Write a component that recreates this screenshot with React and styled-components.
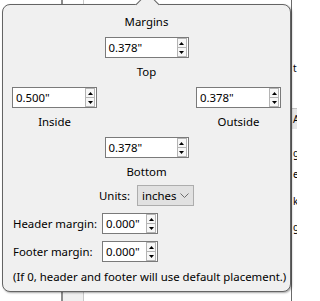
import React from 'react';
import styled, { createGlobalStyle } from 'styled-components';

const GlobalStyle = createGlobalStyle`
  html, body {
    margin: 0;
    padding: 0;
    background: #ffffff;
  }
  body {
    font-family: "Segoe UI", "Noto Sans", "Open Sans", sans-serif;
    font-size: 11.4px;
    color: #000;
  }
`;

const Page = styled.div`
  position: relative;
  width: 297px;
  height: 301px;
  overflow: hidden;
  display: flex;
  background: #fff;
`;

const DocArea = styled.div`
  width: 291px;
  flex-shrink: 0;
  display: flex;
`;

const DocRuler = styled.div`
  margin-left: 61px;
  width: 20px;
  border-left: 2px solid #8c8c8c;
  border-right: 1px solid #c8c8c8;
  background: linear-gradient(to bottom, #fff 0, #fff 280px, #f0f0f0 280px);
`;

const SidePanel = styled.div`
  flex: 1;
  border-left: 1px solid #6a6a6a;
  overflow: hidden;
  display: flex;
  flex-direction: column;
  padding-top: 60px;
`;

const SideLine = styled.div`
  height: ${p => p.$h}px;
  line-height: ${p => p.$h}px;
  padding-left: 1px;
  font-size: 10px;
  white-space: nowrap;
  background: ${p => (p.$shaded ? '#e6e6e6' : 'transparent')};
  border-top: ${p => (p.$shaded ? '1px solid #c4c4c4' : 'none')};
`;

const Popover = styled.div`
  position: absolute;
  left: 2px;
  top: 4px;
  width: 289px;
  box-sizing: border-box;
  background: #f0f0f0;
  border: 1px solid #646464;
  border-radius: 8px;
  box-shadow: 1px 1px 2px rgba(0, 0, 0, 0.35);
  padding: 9px 9px 6px 9px;
  display: flex;
  flex-direction: column;

  &::before {
    content: '';
    position: absolute;
    left: 50%;
    top: -9px;
    width: 16px;
    height: 16px;
    margin-left: -8px;
    background: #f0f0f0;
    border-top: 1px solid #646464;
    border-left: 1px solid #646464;
    transform: rotate(45deg);
  }
`;

const Title = styled.div`
  text-align: center;
  line-height: 16px;
  margin-bottom: 7px;
`;

const MarginGrid = styled.div`
  display: grid;
  grid-template-columns: 85px 85px 85px;
  justify-content: space-between;
  row-gap: 7px;
`;

const Cell = styled.div`
  grid-column: ${p => p.$col};
  grid-row: ${p => p.$row};
  display: flex;
  flex-direction: column;
  align-items: ${p => (p.$col === 2 ? 'center' : 'stretch')};
`;

const CellLabel = styled.div`
  margin-top: 6px;
  line-height: 16px;
  text-align: center;
`;

const SpinBox = styled.div`
  display: flex;
  align-items: center;
  box-sizing: border-box;
  width: ${p => p.$w}px;
  height: 21px;
  border: 1px solid #7a7a7a;
  background: #fff;
  padding: 0 1px 0 3px;
`;

const SpinValue = styled.span`
  flex: 1;
  line-height: 19px;
  white-space: nowrap;
`;

const SpinButtons = styled.div`
  display: flex;
  flex-direction: column;
  width: 10px;
  height: 19px;
`;

const SpinButton = styled.div`
  box-sizing: border-box;
  height: 10px;
  margin-top: ${p => (p.$down ? '-1px' : '0')};
  border: 1px solid #b4b4b4;
  background: #f7f7f7;
  display: flex;
  align-items: center;
  justify-content: center;
`;

const UnitsRow = styled.div`
  display: flex;
  justify-content: center;
  align-items: center;
  gap: 7px;
  margin-top: 5px;
`;

const Dropdown = styled.div`
  box-sizing: border-box;
  width: 57px;
  height: 21px;
  border: 1px solid #adadad;
  background: #e1e1e1;
  display: flex;
  align-items: center;
  justify-content: space-between;
  padding: 0 4px 0 4px;
`;

const FieldRow = styled.div`
  display: flex;
  align-items: center;
  gap: 6px;
  margin-top: 7px;
`;

const FieldLabel = styled.div`
  width: 84px;
  padding-left: 1px;
  box-sizing: border-box;
  white-space: nowrap;
`;

const Note = styled.div`
  margin-top: 7px;
  padding-left: 1px;
  line-height: 16px;
  white-space: nowrap;
`;

const Arrow = ({ down }) => (
  <svg width="5" height="3" viewBox="0 0 5 3">
    <path d={down ? 'M0 0H5L2.5 3Z' : 'M2.5 0L5 3H0Z'} fill="#000" />
  </svg>
);

const Spinner = ({ value, width = 84 }) => (
  <SpinBox $w={width}>
    <SpinValue>{value}</SpinValue>
    <SpinButtons>
      <SpinButton><Arrow /></SpinButton>
      <SpinButton $down><Arrow down /></SpinButton>
    </SpinButtons>
  </SpinBox>
);

const Chevron = () => (
  <svg width="9" height="5" viewBox="0 0 9 5">
    <path d="M0.5 0.5L4.5 4.5L8.5 0.5" fill="none" stroke="#6d6d6d" strokeWidth="1" />
  </svg>
);

const App = () => {
  const sideLines = [
    { text: 't', h: 16 },
    { text: '', h: 32 },
    { text: 'A', h: 20, shaded: true },
    { text: '', h: 16 },
    { text: 'gi', h: 16 },
    { text: 'e', h: 26 },
    { text: 'k', h: 28 },
    { text: 'g', h: 24 },
  ];

  return (
    <>
      <GlobalStyle />
      <Page>
        <DocArea>
          <DocRuler />
        </DocArea>
        <SidePanel>
          {sideLines.map((line, index) => (
            <SideLine key={index} $h={line.h} $shaded={line.shaded}>{line.text}</SideLine>
          ))}
        </SidePanel>

        <Popover>
          <Title>Margins</Title>
          <MarginGrid>
            <Cell $col={2} $row={1}>
              <Spinner value={'0.378"'} />
              <CellLabel>Top</CellLabel>
            </Cell>
            <Cell $col={1} $row={2}>
              <Spinner value={'0.500"'} width={85} />
              <CellLabel>Inside</CellLabel>
            </Cell>
            <Cell $col={3} $row={2}>
              <Spinner value={'0.378"'} width={85} />
              <CellLabel>Outside</CellLabel>
            </Cell>
            <Cell $col={2} $row={3}>
              <Spinner value={'0.378"'} />
              <CellLabel>Bottom</CellLabel>
            </Cell>
          </MarginGrid>

          <UnitsRow>
            <span>Units:</span>
            <Dropdown>
              <span>inches</span>
              <Chevron />
            </Dropdown>
          </UnitsRow>

          <FieldRow>
            <FieldLabel>Header margin:</FieldLabel>
            <Spinner value={'0.000"'} width={56} />
          </FieldRow>
          <FieldRow>
            <FieldLabel>Footer margin:</FieldLabel>
            <Spinner value={'0.000"'} width={56} />
          </FieldRow>

          <Note>(If 0, header and footer will use default placement.)</Note>
        </Popover>
      </Page>
    </>
  );
};

export default App;
